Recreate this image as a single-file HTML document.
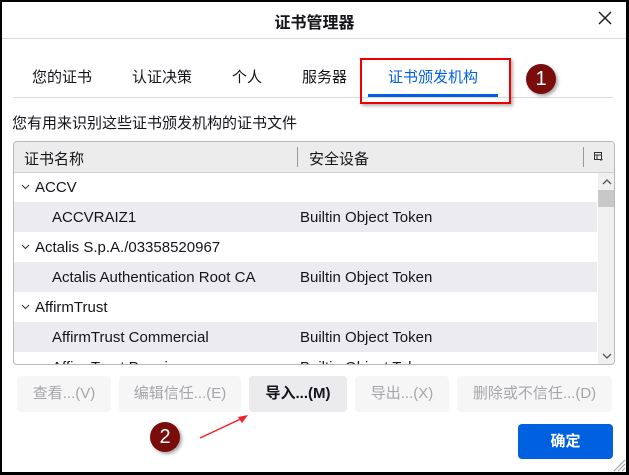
<!DOCTYPE html>
<html><head><meta charset="utf-8"><style>
*{margin:0;padding:0;box-sizing:border-box}
body{width:629px;height:475px;background:#000;position:relative;overflow:hidden;font-family:"Liberation Sans","Noto Sans CJK SC",sans-serif;color:#15141a}
.win{position:absolute;left:2px;top:2px;width:624px;height:470px;background:#fff}
.a{position:absolute;white-space:nowrap}
.t{font-size:15px}
.row{position:absolute;left:14px;width:583px;height:30px;font-size:15px}
.row.g{background:#ececf0}
.row span{position:absolute;top:7px}
.row svg{position:absolute;left:7px;top:12px}
.btn{position:absolute;top:376px;height:36px;border-radius:4px;background:#f6f6f7;color:#a6a6aa;font-size:15px;text-align:center;line-height:36px}
.circ{position:absolute;width:30px;height:30px;border-radius:50%;background:#7a0c0c;color:#fff;font-size:20px;text-align:center;line-height:30px;box-shadow:2px 2px 3px rgba(0,0,0,.35)}
</style></head><body>
<div class="win"></div>
<div class="a" style="left:0;top:9px;width:629px;text-align:center;font-size:16px;font-weight:bold">证书管理器</div>
<svg class="a" style="left:598px;top:11px" width="14" height="14"><path d="M1 1L13 13M13 1L1 13" stroke="#222" stroke-width="1.5"/></svg>
<div class="a" style="left:2px;top:38px;width:624px;height:1px;background:#d8d8d8"></div>
<div class="a t" style="left:32px;top:66px">您的证书</div>
<div class="a t" style="left:132px;top:66px">认证决策</div>
<div class="a t" style="left:232px;top:66px">个人</div>
<div class="a t" style="left:302px;top:66px">服务器</div>
<div class="a t" style="left:388px;top:66px;color:#0061e0">证书颁发机构</div>
<div class="a" style="left:13px;top:97px;width:600px;height:1px;background:#d8d8d8"></div>
<div class="a" style="left:368px;top:94px;width:130px;height:3px;background:#0061e0"></div>
<div class="a" style="left:360px;top:58px;width:151px;height:46px;border:2px solid #e00;box-shadow:2px 2px 3px rgba(0,0,0,.3)"></div>
<div class="circ" style="left:526px;top:64px">1</div>
<div class="a t" style="left:12px;top:112px">您有用来识别这些证书颁发机构的证书文件</div>
<div class="a" style="left:13px;top:141px;width:602px;height:224px;border:1px solid #b8b8bc;border-radius:4px;overflow:hidden;background:#fff">
 <div class="a" style="left:0;top:0;width:600px;height:31px;background:#ececec;border-bottom:1px solid #d0d0d0"></div>
 <div class="a t" style="left:10px;top:6px">证书名称</div>
 <div class="a" style="left:283px;top:5px;width:1px;height:20px;background:#999"></div>
 <div class="a t" style="left:295px;top:6px">安全设备</div>
 <div class="a" style="left:569px;top:5px;width:1px;height:20px;background:#999"></div>
 <svg class="a" style="left:580px;top:10px" width="10" height="10"><rect x="0.5" y="0.5" width="7" height="7" fill="none" stroke="#333"/><path d="M0 3H8M3 3V8" stroke="#333"/><path d="M5 7L9 7L7 9Z" fill="#333"/></svg>
 <div class="a" style="left:584px;top:31px;width:17px;height:193px;background:#f0f0f0"></div>
 <div class="a" style="left:584px;top:48px;width:17px;height:17px;background:#c8c8c8"></div>
 <svg class="a" style="left:588px;top:36px" width="10" height="7"><path d="M1 6L5 2L9 6" stroke="#555" fill="none" stroke-width="1.3"/></svg>
 <svg class="a" style="left:588px;top:211px" width="10" height="7"><path d="M1 1L5 5L9 1" stroke="#555" fill="none" stroke-width="1.3"/></svg>
</div>
<div class="row" style="top:172px"><svg width="9" height="6"><path d="M1 1L4.5 4.5L8 1" stroke="#333" fill="none"/></svg><span style="left:21px">ACCV</span></div>
<div class="row g" style="top:202px"><span style="left:38px">ACCVRAIZ1</span><span style="left:286px">Builtin Object Token</span></div>
<div class="row" style="top:232px"><svg width="9" height="6"><path d="M1 1L4.5 4.5L8 1" stroke="#333" fill="none"/></svg><span style="left:21px">Actalis S.p.A./03358520967</span></div>
<div class="row g" style="top:262px"><span style="left:38px">Actalis Authentication Root CA</span><span style="left:286px">Builtin Object Token</span></div>
<div class="row" style="top:292px"><svg width="9" height="6"><path d="M1 1L4.5 4.5L8 1" stroke="#333" fill="none"/></svg><span style="left:21px">AffirmTrust</span></div>
<div class="row g" style="top:322px"><span style="left:38px">AffirmTrust Commercial</span><span style="left:286px">Builtin Object Token</span></div>
<div class="row" style="top:352px;height:12px;overflow:hidden"><span style="left:38px">AffirmTrust Premium</span><span style="left:286px">Builtin Object Token</span></div>
<div class="btn" style="left:17px;width:94px">查看...(V)</div>
<div class="btn" style="left:119px;width:122px">编辑信任...(E)</div>
<div class="btn" style="left:249px;width:98px;background:#ebebed;color:#15141a;font-weight:bold">导入...(M)</div>
<div class="btn" style="left:355px;width:94px">导出...(X)</div>
<div class="btn" style="left:457px;width:155px">删除或不信任...(D)</div>
<div class="a" style="left:518px;top:424px;width:95px;height:35px;background:#0061e0;border-radius:4px;color:#fff;font-weight:bold;font-size:15px;text-align:center;line-height:35px">确定</div>
<div class="circ" style="left:150px;top:422px">2</div>
<svg class="a" style="left:195px;top:405px" width="60" height="40"><path d="M5 33L50 12" stroke="#e22" stroke-width="1.5"/><path d="M53 10L43 12L47 18Z" fill="#e22"/></svg>
<svg class="a" style="left:612px;top:458px" width="14" height="14"><path d="M2 13L13 2M6 13L13 6M10 13L13 10" stroke="#999"/></svg>
</body></html>
